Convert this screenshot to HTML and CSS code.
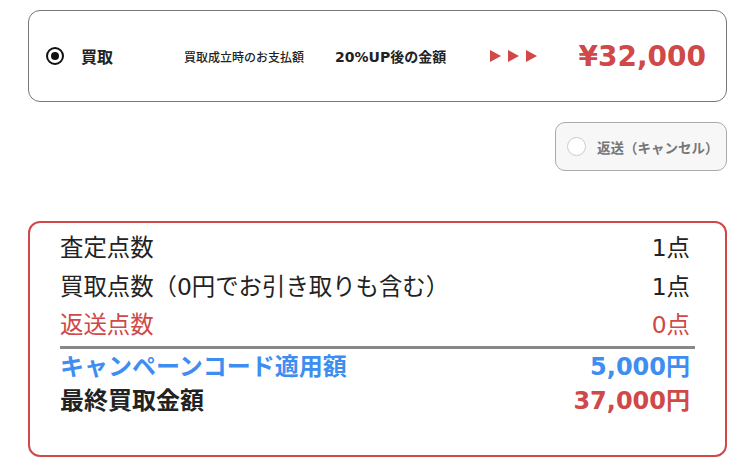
FILE: index.html
```html
<!DOCTYPE html>
<html lang="ja">
<head>
    <meta charset="UTF-8">
    <title>買取金額の確認</title>
    <link rel="stylesheet" href="styles.css">
</head>
<body>
    <div class="choice choice-buy">
        <span class="radio checked"></span>
        <span class="choice-label">買取</span>
        <span class="choice-note">買取成立時のお支払額</span>
        <span class="choice-up">20%UP後の金額</span>
        <span class="arrows">
            <svg width="50" height="14" viewBox="0 0 50 14">
                <polygon points="0,1 11,7 0,13" fill="#d04848"/>
                <polygon points="18,1 29,7 18,13" fill="#d04848"/>
                <polygon points="36,1 47,7 36,13" fill="#d04848"/>
            </svg>
        </span>
        <span class="price">¥32,000</span>
    </div>

    <div class="return-row">
        <div class="choice choice-return">
            <span class="radio"></span>
            <span class="return-label">返送（キャンセル）</span>
        </div>
    </div>

    <div class="summary">
        <div class="summary-row">
            <span>査定点数</span>
            <span>1点</span>
        </div>
        <div class="summary-row">
            <span>買取点数（0円でお引き取りも含む）</span>
            <span>1点</span>
        </div>
        <div class="summary-row red">
            <span>返送点数</span>
            <span>0点</span>
        </div>
        <div class="summary-total">
            <div class="summary-row blue">
                <span>キャンペーンコード適用額</span>
                <span>5,000円</span>
            </div>
            <div class="summary-row final">
                <span>最終買取金額</span>
                <span class="final-price">37,000円</span>
            </div>
        </div>
    </div>
</body>
</html>
```

FILE: styles.css
```css
body {
    font-family: "DejaVu Sans", "Noto Sans CJK JP", sans-serif;
    color: #222;
    margin: 0;
    padding: 10px 29px 0 28px;
    background: #fff;
}
.choice {
    display: flex;
    align-items: center;
    box-sizing: border-box;
}
.choice-buy {
    height: 92px;
    border: 1px solid #777;
    border-radius: 12px;
    padding: 0 20px 0 17px;
}
.radio {
    width: 18px;
    height: 18px;
    border-radius: 50%;
    box-sizing: border-box;
    border: 2px solid #111;
    background: #fff;
    position: relative;
    flex-shrink: 0;
}
.radio.checked::after {
    content: "";
    position: absolute;
    top: 3px;
    left: 3px;
    width: 8px;
    height: 8px;
    border-radius: 50%;
    background: #111;
}
.choice-label {
    font-size: 16px;
    font-weight: bold;
    margin-left: 17px;
    width: 103px;
}
.choice-note {
    font-size: 12px;
    font-weight: 500;
    width: 151px;
}
.choice-up {
    font-size: 14px;
    font-weight: bold;
    width: 155px;
}
.arrows {
    display: flex;
}
.price {
    margin-left: auto;
    font-size: 28px;
    font-weight: bold;
    color: #d04848;
}
.return-row {
    display: flex;
    justify-content: flex-end;
    margin-top: 20px;
}
.choice-return {
    width: 172px;
    height: 49px;
    border: 1px solid #aaa;
    border-radius: 10px;
    background: #f7f7f7;
    padding-left: 11px;
}
.choice-return .radio {
    width: 19px;
    height: 19px;
    border: 1px solid #ccc;
}
.return-label {
    font-size: 13.5px;
    font-weight: bold;
    color: #777;
    margin-left: 11px;
}
.summary {
    margin-top: 50px;
    border: 2px solid #d04848;
    border-radius: 12px;
    padding: 6px 35px 37px 30px;
}
.summary-row {
    display: flex;
    justify-content: space-between;
    font-size: 23.4px;
    line-height: 38.5px;
}
.summary-row.red {
    color: #d04848;
}
.summary-total {
    border-top: 3px solid #888;
    margin: 1px -5px 0 0;
    padding: 1px 5px 0 0;
}
.summary-row.blue {
    color: #3d8ef0;
    font-weight: bold;
    font-size: 24px;
    line-height: 34px;
}
.summary-row.final {
    font-weight: bold;
    font-size: 24px;
    line-height: 34px;
}
.final-price {
    color: #d04848;
}
```
